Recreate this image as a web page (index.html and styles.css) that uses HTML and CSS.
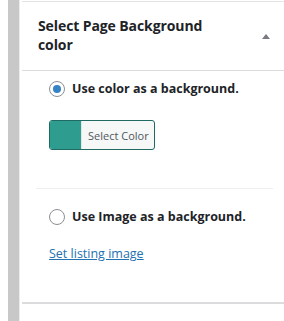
FILE: index.html
```html
<!DOCTYPE html>
<html lang="en">
<head>
  <meta charset="UTF-8" />
  <title>Page Background</title>
  <link rel="stylesheet" href="styles.css">
</head>
<body>
  <div class="page">
    <div class="side-bar"></div>

    <!-- Background box -->
    <div class="postbox">
      <div class="postbox-header">
        <h2>Select Page Background color</h2>
        <span class="toggle-arrow"></span>
      </div>

      <div class="inside">
        <label class="choice">
          <input type="radio" name="bg_type" value="color" checked>
          <span>Use color as a background.</span>
        </label>

        <button class="color-btn" type="button">
          <span class="swatch"></span>
          <span class="color-text">Select Color</span>
        </button>

        <hr class="sep">

        <label class="choice">
          <input type="radio" name="bg_type" value="image">
          <span>Use Image as a background.</span>
        </label>

        <a href="#" class="set-image">Set listing image</a>
      </div>
    </div>
  </div>
</body>
</html>
```

FILE: styles.css
```css
body {
  margin: 0;
  font-family: 'Open Sans', 'Noto Sans', sans-serif;
  background: #fff;
  color: #1d2327;
}

.page {
  display: flex;
  height: 321px;
  padding-left: 8px;
}

.side-bar {
  width: 11px;
  background: #c8c8c8;
  margin-right: 2px;
  border-right: 1px solid #ececec;
}

.postbox {
  flex: 1;
  border-top: 1px solid #e4e4e4;
  margin-top: 1px;
}

.postbox-header {
  display: flex;
  align-items: center;
  justify-content: space-between;
  padding: 14px 14px 16px 16px;
  border-bottom: 1px solid #dcdcde;
}

.postbox-header h2 {
  margin: 0;
  font-size: 14px;
  font-weight: 700;
  line-height: 19px;
  width: 200px;
  letter-spacing: -0.1px;
}

.toggle-arrow {
  width: 0;
  height: 0;
  border-left: 4px solid transparent;
  border-right: 4px solid transparent;
  border-bottom: 5px solid #787c82;
  margin-top: 3px;
}

.inside {
  padding: 0 11px 40px 14px;
  border-bottom: 2px solid #dcdcde;
}

.choice {
  display: flex;
  align-items: center;
  gap: 7px;
  padding: 9px 0 0 13px;
  font-size: 12.5px;
  font-weight: 700;
}

.choice input {
  appearance: none;
  width: 16px;
  height: 16px;
  margin: 0;
  border: 1px solid #8c8f94;
  border-radius: 50%;
  background: #fff;
  display: grid;
  place-items: center;
}

.choice input:checked::before {
  content: '';
  width: 8px;
  height: 8px;
  border-radius: 50%;
  background: #3582c4;
}

.color-btn {
  display: flex;
  align-items: stretch;
  margin: 23px 0 0 13px;
  padding: 0;
  height: 30px;
  border: 1px solid #1f6b64;
  border-radius: 3px;
  background: #f6f7f7;
  overflow: hidden;
  font-family: inherit;
}

.swatch {
  width: 31px;
  background: #2e9c8f;
}

.color-text {
  display: flex;
  align-items: center;
  padding: 0 5px 0 6px;
  font-size: 11px;
  color: #50575e;
  border-left: 1px solid #e5e5e5;
}

.sep {
  margin: 38px 0 0;
  border: 0;
  border-top: 1px solid #eeeeee;
}

.sep + .choice {
  padding-top: 19px;
}

.set-image {
  display: block;
  margin: 20px 0 0 13px;
  font-size: 12.5px;
  color: #2271b1;
}
```
